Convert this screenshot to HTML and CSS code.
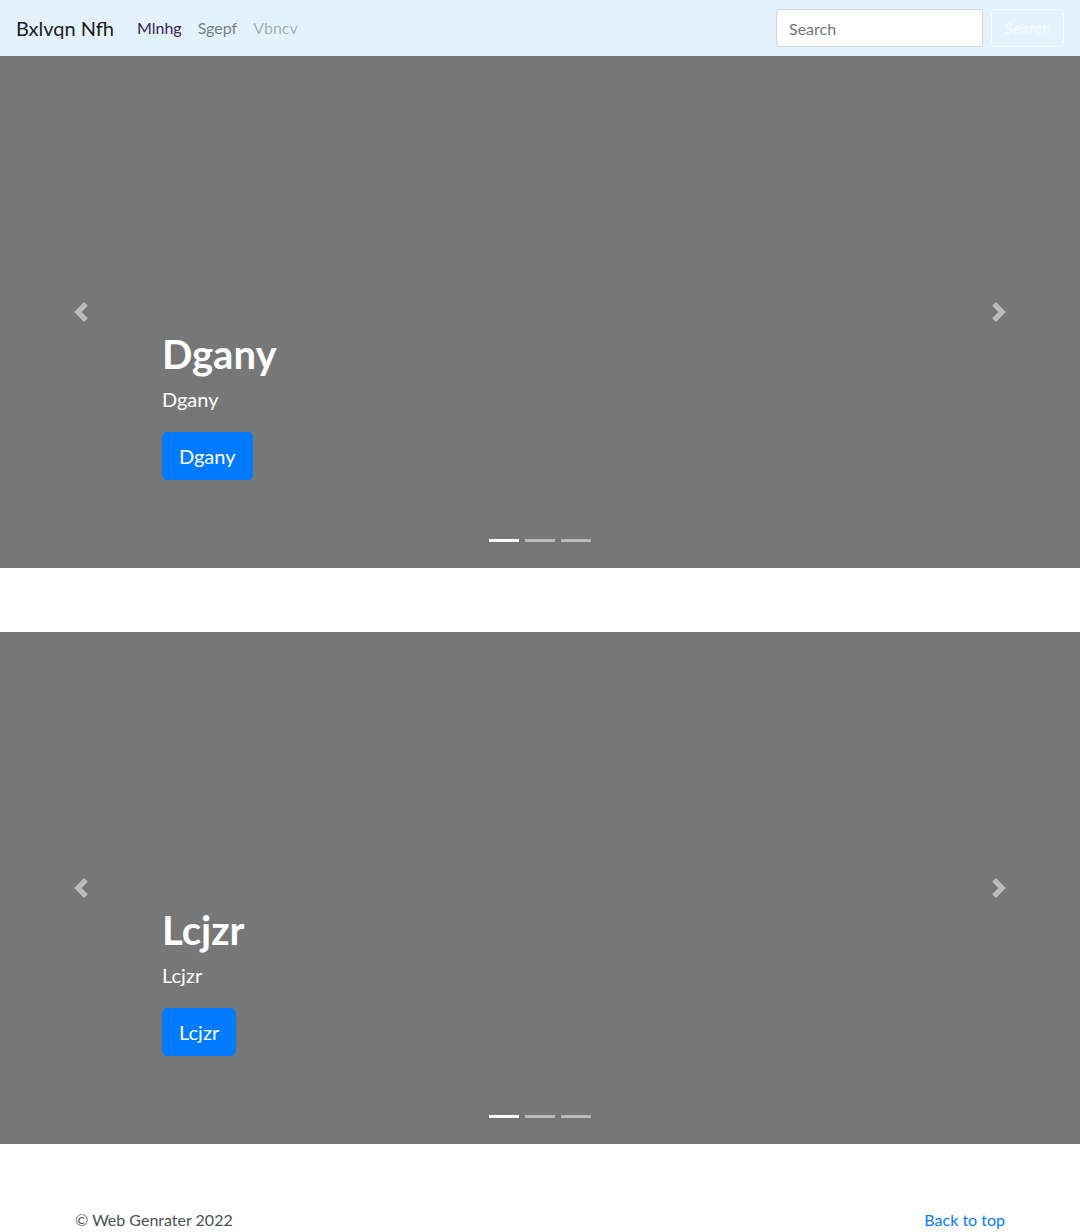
FILE: index.html
```html
<!DOCTYPE html>
<html lang="en">
<head>
<meta charset="utf-8">
<title>Carousel</title>
<link rel="stylesheet" href="styles.css">
</head>
<body>
<header>
  <nav class="navbar">
    <a class="brand" href="#">Bxlvqn Nfh</a>
    <ul class="nav">
      <li><a class="nav-link active" href="#">Mlnhg</a></li>
      <li><a class="nav-link" href="#">Sgepf</a></li>
      <li><a class="nav-link disabled" href="#">Vbncv</a></li>
    </ul>
    <form class="search-form">
      <input class="search-input" type="text" placeholder="Search">
      <button class="search-btn" type="button">Search</button>
    </form>
  </nav>
</header>
<main>
  <div class="carousel">
    <div class="carousel-item">
      <div class="carousel-caption">
        <h1 class="caption-title">Dgany</h1>
        <p class="caption-text">Dgany</p>
        <p class="caption-action"><a class="btn-primary" href="#">Dgany</a></p>
      </div>
    </div>
    <a class="control control-prev" href="#"><svg class="control-icon" viewBox="0 0 8 8"><path d="M5.25 0l-4 4 4 4 1.5-1.5L4.25 4l2.5-2.5L5.25 0z"/></svg></a>
    <a class="control control-next" href="#"><svg class="control-icon" viewBox="0 0 8 8"><path d="M2.75 0l-1.5 1.5L3.75 4l-2.5 2.5L2.75 8l4-4-4-4z"/></svg></a>
    <ol class="indicators">
      <li class="indicator active"></li>
      <li class="indicator"></li>
      <li class="indicator"></li>
    </ol>
  </div>

  <div class="carousel">
    <div class="carousel-item">
      <div class="carousel-caption">
        <h1 class="caption-title">Lcjzr</h1>
        <p class="caption-text">Lcjzr</p>
        <p class="caption-action"><a class="btn-primary" href="#">Lcjzr</a></p>
      </div>
    </div>
    <a class="control control-prev" href="#"><svg class="control-icon" viewBox="0 0 8 8"><path d="M5.25 0l-4 4 4 4 1.5-1.5L4.25 4l2.5-2.5L5.25 0z"/></svg></a>
    <a class="control control-next" href="#"><svg class="control-icon" viewBox="0 0 8 8"><path d="M2.75 0l-1.5 1.5L3.75 4l-2.5 2.5L2.75 8l4-4-4-4z"/></svg></a>
    <ol class="indicators">
      <li class="indicator active"></li>
      <li class="indicator"></li>
      <li class="indicator"></li>
    </ol>
  </div>
</main>
<footer class="footer">
  <p class="copy">&copy; Web Genrater 2022</p>
  <p class="top-link"><a href="#">Back to top</a></p>
</footer>
</body>
</html>
```

FILE: styles.css
```css
* { box-sizing: border-box; }
html, body { margin: 0; padding: 0; }
body {
  font-family: "Segoe UI", Lato, "Noto Sans", Arial, sans-serif;
  font-size: 16px;
  line-height: 1.5;
  color: #212529;
  background: #fff;
}
a { text-decoration: none; }

.navbar {
  height: 56px;
  background: #e3f2fd;
  display: flex;
  align-items: center;
  padding: 8px 16px;
}
.brand {
  font-size: 20px;
  line-height: 30px;
  color: rgba(0,0,0,.9);
  margin-right: 15px;
  padding: 5px 0;
}
.nav {
  display: flex;
  list-style: none;
  margin: 0;
  padding: 0;
  flex: 1;
}
.nav-link {
  display: block;
  padding: 8px 8px;
  color: rgba(0,0,0,.5);
}
.nav-link.active { color: #3a2456; }
.nav-link.disabled { color: rgba(0,0,0,.3); }

.search-form { display: flex; align-items: center; }
.search-input {
  width: 207px;
  height: 38px;
  padding: 6px 12px;
  font: inherit;
  color: #495057;
  background: #fff;
  border: 1px solid #ced4da;
  border-radius: 4px;
  margin-right: 8px;
}
.search-input::placeholder { color: #6c757d; }
.search-btn {
  height: 38px;
  width: 73px;
  padding: 6px 12px;
  font: inherit;
  color: #f8f9fa;
  background: transparent;
  border: 1px solid #f8f9fa;
  border-radius: 4px;
}

.carousel {
  position: relative;
  height: 512px;
  margin-bottom: 64px;
  background: #777;
  overflow: hidden;
}
.carousel-item { height: 512px; position: relative; }
.carousel-caption {
  position: absolute;
  left: 15%;
  right: 15%;
  bottom: 48px;
  padding: 20px 0;
  color: #fff;
  text-align: left;
  z-index: 10;
}
.caption-title {
  font-size: 40px;
  line-height: 1.2;
  font-weight: 700;
  margin: 0 0 6px;
}
.caption-text { font-size: 20px; margin: 0 0 18px; line-height: 30px; }
.caption-action { margin: 0 0 20px; }
.btn-primary {
  display: inline-block;
  background: #007bff;
  color: #fff;
  font-size: 20px;
  line-height: 30px;
  padding: 8px 16px;
  border: 1px solid #007bff;
  border-radius: 5px;
}

.control {
  position: absolute;
  top: 0;
  bottom: 0;
  width: 15%;
  display: flex;
  align-items: center;
  justify-content: center;
  opacity: .5;
  z-index: 1;
}
.control-prev { left: 0; }
.control-next { right: 0; }
.control-icon { width: 20px; height: 20px; fill: #fff; }

.indicators {
  position: absolute;
  left: 0;
  right: 0;
  bottom: 16px;
  margin: 0 15%;
  padding: 0;
  list-style: none;
  display: flex;
  justify-content: center;
  z-index: 15;
}
.indicator {
  box-sizing: content-box;
  width: 30px;
  height: 3px;
  margin: 0 3px;
  background: #fff;
  background-clip: padding-box;
  border-top: 10px solid transparent;
  border-bottom: 10px solid transparent;
  opacity: .5;
}
.indicator.active { opacity: 1; }

.footer {
  width: 960px;
  margin: 0 auto;
  padding: 0 15px;
  display: flex;
  justify-content: space-between;
}
.footer p { margin: 0 0 16px; }
.copy { color: #495057; }
.top-link a { color: #007bff; }
```
